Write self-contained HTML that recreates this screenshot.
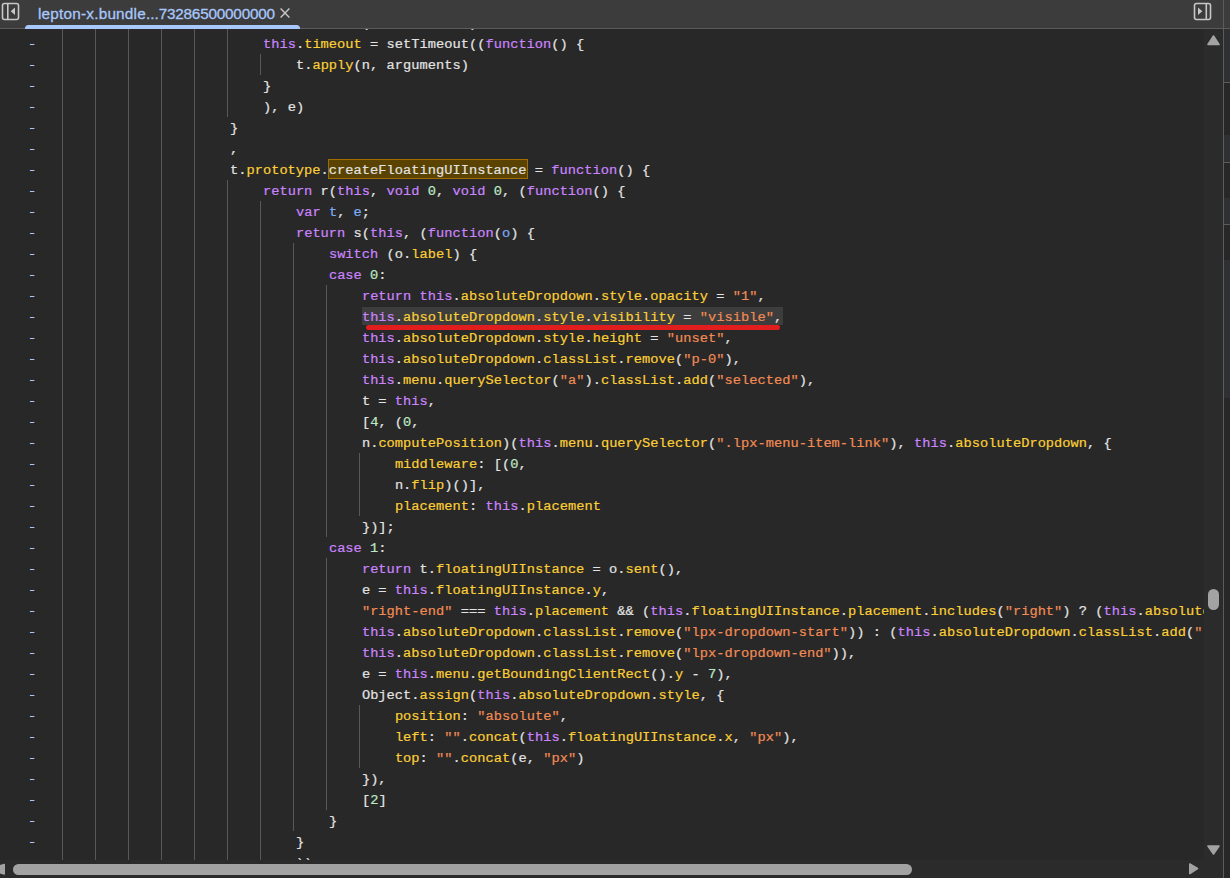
<!DOCTYPE html>
<html><head><meta charset="utf-8">
<style>
html,body{margin:0;padding:0;width:1230px;height:878px;overflow:hidden;background:#282828;}
body{position:relative;font-family:"Liberation Mono",monospace;}
.tabbar{position:absolute;left:0;top:0;width:1223px;height:28px;background:#3c3c3c;border-bottom:1px solid #5b5b5b;}
.tabtext{position:absolute;left:38px;top:5px;-webkit-text-stroke:0.3px #a8c7fa;font-family:"Liberation Sans",sans-serif;font-size:15.3px;line-height:18px;color:#a8c7fa;white-space:nowrap;}
.uline{position:absolute;left:25px;top:25px;width:275px;height:4px;background:#a8c7fa;border-radius:3.5px 3.5px 0 0;}
.vdiv{position:absolute;left:1223px;top:0;width:1px;height:878px;background:#5b5b5b;}
.side{position:absolute;left:1224px;top:0;width:6px;height:878px;background:#272727;}
.code{position:absolute;left:0;top:29px;width:1204px;height:831px;overflow:hidden;}
.inner{position:absolute;left:0;top:-29px;width:1204px;height:878px;}
.ln{position:absolute;white-space:pre;font-size:13.7px;letter-spacing:0.0257px;line-height:21px;height:21px;color:#e3e3e3;-webkit-text-stroke:0.2px currentColor;}
.ln i{font-style:normal;}
.k{color:#cc84ff;} .p{color:#fccf36;} .s{color:#f28b54;} .n{color:#bde8c4;} .d{color:#7cacf8;}
.hl{font-weight:normal;color:#e3e3e3;}
.hlbox{position:absolute;left:328px;top:159px;width:198px;height:18px;background:#5a4300;border:1px solid #a06c00;}
.g{position:absolute;width:1px;background:#585858;}
.dash{position:absolute;left:30px;width:4px;height:1px;background:#a8c7fa;box-shadow:-1px 0 0 #2a3580,1px 0 0 #6a6030;}
.sel{position:absolute;left:362px;top:307px;width:421px;height:18px;background:#3d3d3d;}
.red{position:absolute;left:366px;top:325px;width:414px;height:5px;background:#e11d1d;border-radius:3px;}
.vtrack{position:absolute;left:1204px;top:29px;width:19px;height:849px;background:#2b2b2b;}
.htrack{position:absolute;left:0;top:860px;width:1204px;height:18px;background:#2b2b2b;}
.vthumb{position:absolute;left:1208px;top:589px;width:11px;height:21px;background:#a3a3a3;border-radius:6px;}
.hthumb{position:absolute;left:13px;top:864px;width:899px;height:11px;background:#a3a3a3;border-radius:6px;}
</style></head><body>
<div class="vtrack"></div>
<div class="htrack"></div>
<div class="code"><div class="inner">
<div class="g" style="left:62px;top:29.0px;height:831.0px"></div><div class="g" style="left:95px;top:29.0px;height:831.0px"></div><div class="g" style="left:128px;top:29.0px;height:831.0px"></div><div class="g" style="left:161px;top:29.0px;height:831.0px"></div><div class="g" style="left:194px;top:29.0px;height:831.0px"></div><div class="g" style="left:227px;top:29.0px;height:88.0px"></div><div class="g" style="left:227px;top:180.0px;height:680.0px"></div><div class="g" style="left:260px;top:54.0px;height:21.0px"></div><div class="g" style="left:260px;top:201.0px;height:659.0px"></div><div class="g" style="left:293px;top:243.0px;height:588.0px"></div><div class="g" style="left:326px;top:285.0px;height:252.0px"></div><div class="g" style="left:326px;top:558.0px;height:252.0px"></div><div class="g" style="left:359px;top:453.0px;height:63.0px"></div><div class="g" style="left:359px;top:705.0px;height:63.0px"></div>
<div class="dash" style="top:44px"></div><div class="dash" style="top:65px"></div><div class="dash" style="top:86px"></div><div class="dash" style="top:107px"></div><div class="dash" style="top:128px"></div><div class="dash" style="top:149px"></div><div class="dash" style="top:170px"></div><div class="dash" style="top:191px"></div><div class="dash" style="top:212px"></div><div class="dash" style="top:233px"></div><div class="dash" style="top:254px"></div><div class="dash" style="top:275px"></div><div class="dash" style="top:296px"></div><div class="dash" style="top:317px"></div><div class="dash" style="top:338px"></div><div class="dash" style="top:359px"></div><div class="dash" style="top:380px"></div><div class="dash" style="top:401px"></div><div class="dash" style="top:422px"></div><div class="dash" style="top:443px"></div><div class="dash" style="top:464px"></div><div class="dash" style="top:485px"></div><div class="dash" style="top:506px"></div><div class="dash" style="top:527px"></div><div class="dash" style="top:548px"></div><div class="dash" style="top:569px"></div><div class="dash" style="top:590px"></div><div class="dash" style="top:611px"></div><div class="dash" style="top:632px"></div><div class="dash" style="top:653px"></div><div class="dash" style="top:674px"></div><div class="dash" style="top:695px"></div><div class="dash" style="top:716px"></div><div class="dash" style="top:737px"></div><div class="dash" style="top:758px"></div><div class="dash" style="top:779px"></div><div class="dash" style="top:800px"></div><div class="dash" style="top:821px"></div><div class="dash" style="top:842px"></div>
<div class="sel"></div>
<div class="hlbox"></div>
<div class="ln" style="top:12.50px;left:262.928px">clearTimeout(<i class="k">this</i>.<i class="p">timeout</i>),</div><div class="ln" style="top:33.50px;left:262.928px"><i class="k">this</i>.<i class="p">timeout</i> = setTimeout((<i class="k">function</i>() {</div><div class="ln" style="top:54.50px;left:295.916px">t.<i class="p">apply</i>(n, arguments)</div><div class="ln" style="top:75.50px;left:262.928px">}</div><div class="ln" style="top:96.50px;left:262.928px">), e)</div><div class="ln" style="top:117.50px;left:229.940px">}</div><div class="ln" style="top:138.50px;left:229.940px">,</div><div class="ln" style="top:159.50px;left:229.940px">t.<i class="p">prototype</i>.<b class="hl">createFloatingUIInstance</b> = <i class="k">function</i>() {</div><div class="ln" style="top:180.50px;left:262.928px"><i class="k">return</i> r(<i class="k">this</i>, <i class="k">void</i> <i class="n">0</i>, <i class="k">void</i> <i class="n">0</i>, (<i class="k">function</i>() {</div><div class="ln" style="top:201.50px;left:295.916px"><i class="k">var</i> <i class="d">t</i>, <i class="d">e</i>;</div><div class="ln" style="top:222.50px;left:295.916px"><i class="k">return</i> s(<i class="k">this</i>, (<i class="k">function</i>(<i class="d">o</i>) {</div><div class="ln" style="top:243.50px;left:328.904px"><i class="k">switch</i> (o.<i class="p">label</i>) {</div><div class="ln" style="top:264.50px;left:328.904px"><i class="k">case</i> <i class="n">0</i>:</div><div class="ln" style="top:285.50px;left:361.892px"><i class="k">return</i> <i class="k">this</i>.<i class="p">absoluteDropdown</i>.<i class="p">style</i>.<i class="p">opacity</i> = <i class="s">&quot;1&quot;</i>,</div><div class="ln" style="top:306.50px;left:361.892px"><i class="k">this</i>.<i class="p">absoluteDropdown</i>.<i class="p">style</i>.<i class="p">visibility</i> = <i class="s">&quot;visible&quot;</i>,</div><div class="ln" style="top:327.50px;left:361.892px"><i class="k">this</i>.<i class="p">absoluteDropdown</i>.<i class="p">style</i>.<i class="p">height</i> = <i class="s">&quot;unset&quot;</i>,</div><div class="ln" style="top:348.50px;left:361.892px"><i class="k">this</i>.<i class="p">absoluteDropdown</i>.<i class="p">classList</i>.<i class="p">remove</i>(<i class="s">&quot;p-0&quot;</i>),</div><div class="ln" style="top:369.50px;left:361.892px"><i class="k">this</i>.<i class="p">menu</i>.<i class="p">querySelector</i>(<i class="s">&quot;a&quot;</i>).<i class="p">classList</i>.<i class="p">add</i>(<i class="s">&quot;selected&quot;</i>),</div><div class="ln" style="top:390.50px;left:361.892px">t = <i class="k">this</i>,</div><div class="ln" style="top:411.50px;left:361.892px">[<i class="n">4</i>, (<i class="n">0</i>,</div><div class="ln" style="top:432.50px;left:361.892px">n.<i class="p">computePosition</i>)(<i class="k">this</i>.<i class="p">menu</i>.<i class="p">querySelector</i>(<i class="s">&quot;.lpx-menu-item-link&quot;</i>), <i class="k">this</i>.<i class="p">absoluteDropdown</i>, {</div><div class="ln" style="top:453.50px;left:394.880px"><i class="p">middleware</i>: [(<i class="n">0</i>,</div><div class="ln" style="top:474.50px;left:394.880px">n.<i class="p">flip</i>)()],</div><div class="ln" style="top:495.50px;left:394.880px"><i class="p">placement</i>: <i class="k">this</i>.<i class="p">placement</i></div><div class="ln" style="top:516.50px;left:361.892px">})];</div><div class="ln" style="top:537.50px;left:328.904px"><i class="k">case</i> <i class="n">1</i>:</div><div class="ln" style="top:558.50px;left:361.892px"><i class="k">return</i> t.<i class="p">floatingUIInstance</i> = o.<i class="p">sent</i>(),</div><div class="ln" style="top:579.50px;left:361.892px">e = <i class="k">this</i>.<i class="p">floatingUIInstance</i>.<i class="p">y</i>,</div><div class="ln" style="top:600.50px;left:361.892px"><i class="s">&quot;right-end&quot;</i> === <i class="k">this</i>.<i class="p">placement</i> &amp;&amp; (<i class="k">this</i>.<i class="p">floatingUIInstance</i>.<i class="p">placement</i>.<i class="p">includes</i>(<i class="s">&quot;right&quot;</i>) ? (<i class="k">this</i>.<i class="p">absoluteDropdown</i>.<i class="p">classList</i>.<i class="p">add</i>(<i class="s">&quot;lpx-dropdown-end&quot;</i>),</div><div class="ln" style="top:621.50px;left:361.892px"><i class="k">this</i>.<i class="p">absoluteDropdown</i>.<i class="p">classList</i>.<i class="p">remove</i>(<i class="s">&quot;lpx-dropdown-start&quot;</i>)) : (<i class="k">this</i>.<i class="p">absoluteDropdown</i>.<i class="p">classList</i>.<i class="p">add</i>(<i class="s">&quot;lpx-dropdown-start&quot;</i>),</div><div class="ln" style="top:642.50px;left:361.892px"><i class="k">this</i>.<i class="p">absoluteDropdown</i>.<i class="p">classList</i>.<i class="p">remove</i>(<i class="s">&quot;lpx-dropdown-end&quot;</i>)),</div><div class="ln" style="top:663.50px;left:361.892px">e = <i class="k">this</i>.<i class="p">menu</i>.<i class="p">getBoundingClientRect</i>().<i class="p">y</i> - <i class="n">7</i>),</div><div class="ln" style="top:684.50px;left:361.892px">Object.<i class="p">assign</i>(<i class="k">this</i>.<i class="p">absoluteDropdown</i>.<i class="p">style</i>, {</div><div class="ln" style="top:705.50px;left:394.880px"><i class="p">position</i>: <i class="s">&quot;absolute&quot;</i>,</div><div class="ln" style="top:726.50px;left:394.880px"><i class="p">left</i>: <i class="s">&quot;&quot;</i>.<i class="p">concat</i>(<i class="k">this</i>.<i class="p">floatingUIInstance</i>.<i class="p">x</i>, <i class="s">&quot;px&quot;</i>),</div><div class="ln" style="top:747.50px;left:394.880px"><i class="p">top</i>: <i class="s">&quot;&quot;</i>.<i class="p">concat</i>(e, <i class="s">&quot;px&quot;</i>)</div><div class="ln" style="top:768.50px;left:361.892px">}),</div><div class="ln" style="top:789.50px;left:361.892px">[<i class="n">2</i>]</div><div class="ln" style="top:810.50px;left:328.904px">}</div><div class="ln" style="top:831.50px;left:295.916px">}</div><div class="ln" style="top:852.50px;left:295.916px">))</div>
<div class="red"></div>
</div></div>
<div class="vthumb"></div>
<div class="hthumb"></div>
<svg style="position:absolute;left:1204px;top:29px" width="19" height="849">
<path d="M4 15.5 L9.5 7 L15 15.5 Z" fill="#a3a3a3" stroke="#a3a3a3" stroke-width="1.6" stroke-linejoin="round"/>
<path d="M4 817 L15 817 L9.5 825 Z" fill="#a3a3a3" stroke="#a3a3a3" stroke-width="1.6" stroke-linejoin="round"/>
</svg>
<svg style="position:absolute;left:0;top:859px" width="1204" height="19">
<path d="M4.2 5.6 L-12 10.2 L4.2 14.9 Z" fill="#a3a3a3" stroke="#a3a3a3" stroke-width="1.6" stroke-linejoin="round"/>
<path d="M1189.8 5 L1197.5 9.5 L1189.8 14.5 Z" fill="#a3a3a3" stroke="#a3a3a3" stroke-width="1.6" stroke-linejoin="round"/>
</svg>
<div class="tabbar"></div>
<svg style="position:absolute;left:0;top:0" width="24" height="24">
<rect x="2.5" y="3.5" width="16" height="16" rx="2" fill="none" stroke="#c7c7c7" stroke-width="1.6"/>
<rect x="7" y="4" width="1.6" height="15" fill="#c7c7c7"/>
<path d="M15 7.5 L10.7 11.3 L15 15 Z" fill="#c7c7c7"/>
</svg>
<div class="tabtext"><span style="letter-spacing:0.22px">lepton-x.bundle</span>...<span style="letter-spacing:-0.21px">73286500000000</span></div>
<svg style="position:absolute;left:278px;top:6px" width="14" height="14">
<path d="M2.6 2.6 L11.4 11.4 M11.4 2.6 L2.6 11.4" stroke="#c7c7c7" stroke-width="1.4"/>
</svg>
<div class="uline"></div>
<svg style="position:absolute;left:1190px;top:0" width="24" height="24">
<rect x="4.5" y="3.5" width="16" height="16" rx="2" fill="none" stroke="#c7c7c7" stroke-width="1.6"/>
<rect x="15.5" y="4" width="1.6" height="15" fill="#c7c7c7"/>
<path d="M8 7.5 L12.3 11.3 L8 15 Z" fill="#c7c7c7"/>
</svg>
<div class="vdiv"></div>
<div class="side">
<div style="position:absolute;left:0;top:0;width:6px;height:28px;background:#3c3c3c;"></div>
<div style="position:absolute;left:0;top:28px;width:6px;height:1px;background:#5b5b5b;"></div>
<div style="position:absolute;left:0;top:29px;width:6px;height:53px;background:#2e3033;"></div>
<div style="position:absolute;left:0;top:82px;width:6px;height:1px;background:#5b5b5b;"></div>
<div style="position:absolute;left:0;top:135px;width:6px;height:27px;background:#2e3033;"></div>
<div style="position:absolute;left:0;top:162px;width:6px;height:1px;background:#5b5b5b;"></div>
<div style="position:absolute;left:0;top:198px;width:6px;height:26px;background:#2e3033;"></div>
<div style="position:absolute;left:0;top:224px;width:6px;height:1px;background:#5b5b5b;"></div>
<div style="position:absolute;left:0;top:260px;width:6px;height:138px;background:#2e3033;"></div>
</div>
</body></html>
